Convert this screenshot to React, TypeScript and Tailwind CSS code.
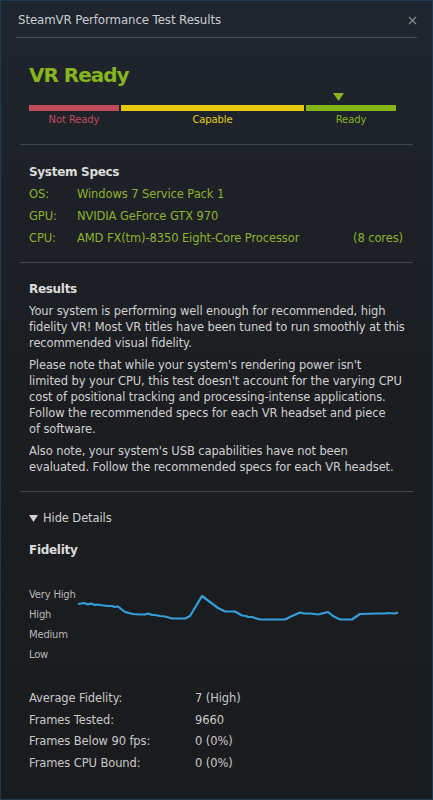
import React from 'react';

const LINE: [number, number][] = [
  [78, 603], [81, 602.5], [84, 602], [88, 603.5], [91, 602.5], [95, 604], [98, 603.5], [100, 604], [104, 604.5], [108, 605], [112, 605], [115, 606], [118, 605.5],
  [125, 611], [133, 613], [140, 613.5], [145, 613.5], [148, 612.5], [152, 614], [155, 614], [160, 615], [165, 615.5], [172, 617.5],
  [185, 617.5], [190, 615], [196, 605], [202, 595], [210, 601], [218, 607], [225, 610.5],
  [235, 610.5], [242, 614.5], [246, 615], [248, 616], [252, 616], [255, 617], [260, 618.5], [285, 618.5], [292, 615],
  [300, 611.5], [304, 612.5], [310, 612.5], [318, 613.5], [328, 611], [333, 615], [340, 618.5], [352, 618.5],
  [360, 613], [378, 612.5], [385, 612.5], [388, 612], [395, 612.5], [398, 611.5],
];

const SPECS = [
  { label: 'OS:', value: 'Windows 7 Service Pack 1' },
  { label: 'GPU:', value: 'NVIDIA GeForce GTX 970' },
  { label: 'CPU:', value: 'AMD FX(tm)-8350 Eight-Core Processor', extra: '(8 cores)' },
];

const STATS = [
  ['Average Fidelity:', '7 (High)'],
  ['Frames Tested:', '9660'],
  ['Frames Below 90 fps:', '0 (0%)'],
  ['Frames CPU Bound:', '0 (0%)'],
];

// lines are broken the way the dialog breaks them
const RESULTS = [
  [
    'Your system is performing well enough for recommended, high',
    'fidelity VR! Most VR titles have been tuned to run smoothly at this',
    'recommended visual fidelity.',
  ],
  [
    "Please note that while your system's rendering power isn't",
    "limited by your CPU, this test doesn't account for the varying CPU",
    'cost of positional tracking and processing-intense applications.',
    'Follow the recommended specs for each VR headset and piece',
    'of software.',
  ],
  [
    "Also note, your system's USB capabilities have not been",
    'evaluated. Follow the recommended specs for each VR headset.',
  ],
];

const Sep = ({ className }: { className: string }) => <div className={`h-px bg-[#41464d] ${className}`} />;

export default function App() {
  const pts = LINE.map(([x, y]) => `${x - 77},${y - 584}`).join(' ');

  return (
    <div className="w-[433px] h-[800px] overflow-hidden border border-[#1d3a53] bg-linear-to-b from-[#1f252e] via-[#1b1d20] to-[#1a1b1d] font-['DejaVu_Sans',sans-serif] text-[11.5px] tracking-[-0.1px] text-[#d0d0d0]">
      {/* title bar */}
      <div className="mx-[15px] h-[37px] pt-[4px] pl-[2px] flex items-center justify-between border-b border-[#4a4f57]">
        <span className="text-[11.8px] text-[#c9cdd2]">SteamVR Performance Test Results</span>
        <svg width="9" height="9" viewBox="0 0 9 9" className="-mt-[2px]">
          <path d="M1 1L8 8M8 1L1 8" stroke="#80858c" strokeWidth="1.4" />
        </svg>
      </div>

      <div className="px-[19px]">
        <div className="px-[9px]">
          <div className="mt-[24px] text-[20px] leading-[26px] tracking-[-1px] font-bold text-[#86b51f]">VR Ready</div>

          <svg width="11" height="8" viewBox="0 0 11 8" className="mt-[5px] ml-[304px] block">
            <path d="M0 0H11L5.5 8Z" fill="#86b51f" />
          </svg>
          <div className="mt-[4px] flex gap-[2px]">
            <div className="w-[90px] h-[6px] bg-[#c04b5b]" />
            <div className="w-[183px] h-[6px] bg-[#e6cb12]" />
            <div className="w-[90px] h-[6px] bg-[#86b51a]" />
          </div>
          <div className="mt-[2px] flex gap-[2px] text-[10px] leading-[14px]">
            <div className="w-[90px] text-center text-[#c04b5b]">Not Ready</div>
            <div className="w-[183px] text-center text-[#e6cb12]">Capable</div>
            <div className="w-[90px] text-center text-[#86b51a]">Ready</div>
          </div>
        </div>

        <Sep className="mt-[17px]" />

        <div className="px-[9px]">
          <div className="mt-[18px] font-bold text-[12px] tracking-[-0.3px] leading-[18px] text-[#dcdcdc]">System Specs</div>
          <div className="mt-[2px] text-[#8db22c]">
            {SPECS.map((s) => (
              <div key={s.label} className="flex leading-[22px]">
                <span className="w-[48px]">{s.label}</span>
                <span className="flex-1">{s.value}</span>
                {s.extra && <span className="pr-[1px]">{s.extra}</span>}
              </div>
            ))}
          </div>
        </div>

        <Sep className="mt-[13px]" />

        <div className="px-[9px]">
          <div className="mt-[17px] font-bold text-[12px] tracking-[-0.3px] leading-[18px] text-[#dcdcdc]">Results</div>
          <div className="mt-[5px] leading-[16px] space-y-[6px]">
            {RESULTS.map((para, i) => (
              <p key={i}>
                {para.map((line) => (
                  <span key={line} className="block whitespace-nowrap">{line}</span>
                ))}
              </p>
            ))}
          </div>
        </div>

        <Sep className="mt-[16px]" />

        <div className="px-[9px]">
          <div className="mt-[18px] flex items-center leading-[16px]">
            <svg width="9" height="7" viewBox="0 0 9 7" className="mr-[5px]">
              <path d="M0 0H9L4.5 7Z" fill="#d0d0d0" />
            </svg>
            <span>Hide Details</span>
          </div>

          <div className="mt-[15px] font-bold text-[12px] tracking-[-0.3px] leading-[18px] text-[#dcdcdc]">Fidelity</div>

          <div className="mt-[26px] flex">
            <div className="w-[48px] shrink-0 whitespace-nowrap text-[10px] tracking-[-0.2px] leading-[20px] text-[#b9b9b9]">
              <div>Very High</div>
              <div>High</div>
              <div>Medium</div>
              <div>Low</div>
            </div>
            <svg width="324" height="80" viewBox="0 0 324 80" className="shrink-0">
              <polyline points={pts} fill="none" stroke="#33a0dc" strokeWidth="2.2" strokeLinejoin="round" />
            </svg>
          </div>

          <div className="mt-[23px] leading-[21.6px] text-[#c9c9c9]">
            {STATS.map(([k, v]) => (
              <div key={k} className="flex">
                <span className="w-[166px]">{k}</span>
                <span>{v}</span>
              </div>
            ))}
          </div>
        </div>
      </div>
    </div>
  );
}
